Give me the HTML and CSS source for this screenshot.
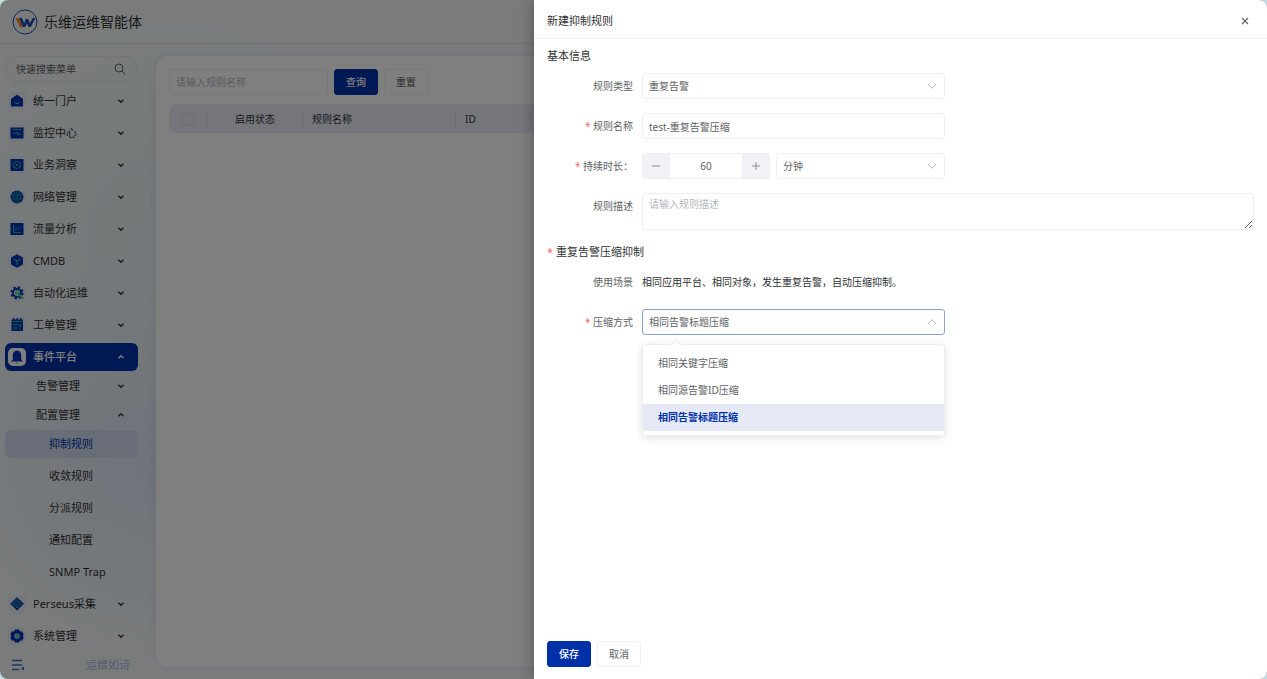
FILE: index.html
```html
<!DOCTYPE html>
<html lang="zh-CN">
<head>
    <meta charset="UTF-8">
    <meta name="viewport" content="width=device-width, initial-scale=1.0">
    <title>乐维运维智能体</title>
    <link rel="stylesheet" href="styles.css">
</head>
<body>
    <svg class="sprite" aria-hidden="true">
        <symbol id="chevron" viewBox="0 0 8 8"><path d="M1.5 2.8 4 5.2 6.5 2.8" fill="none" stroke="currentColor" stroke-width="1.4"/></symbol>
        <symbol id="arrow" viewBox="0 0 10 10"><path d="M1 3 5 7.3 9 3" fill="none" stroke="currentColor" stroke-width="1"/></symbol>
    </svg>

    <div class="app">
        <header class="topbar">
            <svg class="logo" viewBox="0 0 26 26">
                <circle cx="13" cy="13" r="12" fill="none" stroke="#1c4bb8" stroke-width="1"/>
                <path d="M3.5 9H7l4.2 9.200H7.800z" fill="#f08a24"/>
                <path d="M8.400 9 12.300 17.400 15 10.500 17.600 17.400 22.200 9" stroke="#1c4bb8" stroke-width="2.600" fill="none" stroke-linejoin="bevel"/>
            </svg>
            <h1>乐维运维智能体</h1>
        </header>

        <div class="layout">
            <aside class="sidebar">
                <div class="menu-search">
                    <input type="text" placeholder="快速搜索菜单" aria-label="快速搜索菜单">
                    <svg viewBox="0 0 12 12"><circle cx="5" cy="5" r="4" fill="none" stroke="currentColor"/><path d="M8 8 11.5 11.5" stroke="currentColor"/></svg>
                </div>
                <nav class="menu">
                    <button class="item">
                        <svg class="icon" viewBox="0 0 18 18"><path d="M9 2.5 15 7v7.5H3V7z" fill="#0033b5"/><path d="M6.5 10.500q2.500 2.500 5 0" stroke="#2fd58a" fill="none"/></svg>
                        <span>统一门户</span><svg class="chevron"><use href="#chevron"/></svg>
                    </button>
                    <button class="item">
                        <svg class="icon" viewBox="0 0 18 18"><path d="M2.5 3.500h13v11h-13z" fill="#0033b5"/><path d="M5 5.500h8M5 9.500h2l1.300-1.500 1.700 3.500 1.200-2H13" stroke="#2fd58a" stroke-width=".8" fill="none"/></svg>
                        <span>监控中心</span><svg class="chevron"><use href="#chevron"/></svg>
                    </button>
                    <button class="item">
                        <svg class="icon" viewBox="0 0 18 18"><path d="M2.5 3h13v12h-13z" fill="#0033b5"/><circle cx="9" cy="9" r="3.500" fill="none" stroke="#2fd58a" stroke-dasharray="4.500 1"/><circle cx="9" cy="9" r="1" fill="#2fd58a"/></svg>
                        <span>业务洞察</span><svg class="chevron"><use href="#chevron"/></svg>
                    </button>
                    <button class="item">
                        <svg class="icon" viewBox="0 0 18 18"><circle cx="9" cy="9" r="6.500" fill="#0033b5"/><path d="M3 7h12M3 11h12M9 2.500v13M7 3Q4 9 7 15M11 3q3 6 0 12" stroke="#28b98a" stroke-width=".7" fill="none"/></svg>
                        <span>网络管理</span><svg class="chevron"><use href="#chevron"/></svg>
                    </button>
                    <button class="item">
                        <svg class="icon" viewBox="0 0 18 18"><path d="M2.5 3h13v12h-13z" fill="#0033b5"/><path d="M5.500 5v7.500H13M6.500 10.500l2-2.500 1.500 1.500L13 6.500" stroke="#2fd58a" stroke-width=".8" fill="none"/></svg>
                        <span>流量分析</span><svg class="chevron"><use href="#chevron"/></svg>
                    </button>
                    <button class="item">
                        <svg class="icon" viewBox="0 0 18 18"><path d="M9 2.300 15 5.500v7L9 15.700 3 12.500v-7z" fill="#0033b5"/><path d="M5.500 7 9 9l3.500-2M9 9v4" stroke="#2fd58a" fill="none"/></svg>
                        <span>CMDB</span><svg class="chevron"><use href="#chevron"/></svg>
                    </button>
                    <button class="item">
                        <svg class="icon" viewBox="0 0 18 18"><circle cx="9" cy="8.800" r="5.500" fill="none" stroke="#0033b5" stroke-width="2.200" stroke-dasharray="2.300 2.020"/><circle cx="9" cy="8.800" r="4" fill="none" stroke="#0033b5" stroke-width="1.800"/><circle cx="9.300" cy="8.600" r="1.700" fill="none" stroke="#2fd58a" stroke-width="1.400"/><path d="m10.500 10 4.500 4.800" stroke="#2fd58a" stroke-width="2"/></svg>
                        <span>自动化运维</span><svg class="chevron"><use href="#chevron"/></svg>
                    </button>
                    <button class="item">
                        <svg class="icon" viewBox="0 0 18 18"><path d="M3.500 3.500h11.500v11.500H3.500zM5 2h1.500v2H5zM8.500 2H10v2H8.500zM12 2h1.500v2H12z" fill="#0033b5"/><path d="M4 5.500h10.500M5 8.500h5M5 11h4M5 13h4M11 8l1 2 1-2M12 10v4" stroke="#2fd58a" stroke-width=".8" fill="none"/></svg>
                        <span>工单管理</span><svg class="chevron"><use href="#chevron"/></svg>
                    </button>
                    <button class="item active" aria-expanded="true">
                        <svg class="icon" viewBox="0 0 18 18"><path d="M9 2.500q4.200.5 4.200 5v4l1.800 2H3l1.800-2v-4q0-4.500 4.200-5z" fill="#0033b5"/><path d="M7.500 14.500h3L9 16z" fill="#2fd58a"/></svg>
                        <span>事件平台</span><svg class="chevron up"><use href="#chevron"/></svg>
                    </button>
                    <div class="submenu">
                        <button class="item"><span>告警管理</span><svg class="chevron"><use href="#chevron"/></svg></button>
                        <button class="item" aria-expanded="true"><span>配置管理</span><svg class="chevron up"><use href="#chevron"/></svg></button>
                        <div class="leaves">
                            <a class="current" href="#">抑制规则</a>
                            <a href="#">收敛规则</a>
                            <a href="#">分派规则</a>
                            <a href="#">通知配置</a>
                            <a href="#">SNMP Trap</a>
                        </div>
                    </div>
                    <button class="item">
                        <svg class="icon" viewBox="0 0 18 18"><path d="m9 2.200 6.800 6.600L9 15.400 2.200 8.800z" fill="#0033b5"/><path d="m9 4.500 1.500 1.500L9 7.500 7.500 6zM9 10l1.500 1.500L9 13l-1.500-1.500zM6 7.300l1.500 1.500L6 10.300 4.500 8.800zM12 7.300l1.500 1.500-1.500 1.500-1.500-1.500z" fill="none" stroke="#2fd58a" stroke-width=".8"/></svg>
                        <span>Perseus采集</span><svg class="chevron"><use href="#chevron"/></svg>
                    </button>
                    <button class="item">
                        <svg class="icon" viewBox="0 0 18 18"><path d="M7 2.500h4l.8 1.800 2.400.2 1.500 3-1 1.500 1 1.600-1.500 3-2.400.2-.8 1.700H7l-.8-1.700-2.400-.2-1.500-3 1-1.600-1-1.500 1.500-3 2.400-.2z" fill="#0033b5"/><circle cx="9" cy="9" r="2.600" fill="#cfe8dc"/><circle cx="9" cy="9" r="1.800" fill="#35c98a"/></svg>
                        <span>系统管理</span><svg class="chevron"><use href="#chevron"/></svg>
                    </button>
                </nav>
                <div class="sidebar-foot">
                    <button aria-label="收起菜单">
                        <svg viewBox="0 0 12 12"><path d="M0 1.500h10M0 6h10M0 10.500h7" stroke="currentColor" stroke-width="1.400"/><path d="M12 7.500v4L8.500 9.500z" fill="currentColor"/></svg>
                    </button>
                    <span>运维如诗</span>
                </div>
            </aside>

            <main class="panel">
                <div class="filter">
                    <input type="text" placeholder="请输入规则名称" aria-label="规则名称">
                    <button class="btn primary">查询</button>
                    <button class="btn">重置</button>
                </div>
                <table class="rules">
                    <colgroup><col class="col-check"><col class="col-status"><col class="col-name"><col class="col-id"><col></colgroup>
                    <thead>
                        <tr>
                            <th><input type="checkbox" aria-label="全选"></th>
                            <th class="center">启用状态</th>
                            <th>规则名称</th>
                            <th>ID</th>
                            <th></th>
                        </tr>
                    </thead>
                </table>
            </main>
        </div>

        <div class="mask"></div>

        <section class="drawer" role="dialog" aria-labelledby="drawer-title">
            <header class="drawer-head">
                <h2 id="drawer-title">新建抑制规则</h2>
                <button class="close" aria-label="关闭"><svg viewBox="0 0 8 8"><path d="m1 1 6 6M7 1 1 7" stroke="currentColor" stroke-width="1.200"/></svg></button>
            </header>
            <form class="form">
                <h3>基本信息</h3>
                <div class="row">
                    <label for="type">规则类型</label>
                    <div class="select medium">
                        <select id="type"><option>重复告警</option></select>
                        <svg><use href="#arrow"/></svg>
                    </div>
                </div>
                <div class="row">
                    <label class="required" for="name">规则名称</label>
                    <input class="medium" id="name" type="text" value="test-重复告警压缩">
                </div>
                <div class="row">
                    <label class="required" for="duration">持续时长：</label>
                    <div class="duration medium">
                        <div class="stepper">
                            <button type="button" aria-label="减少"><svg viewBox="0 0 8 8"><path d="M0 4h8" stroke="currentColor"/></svg></button>
                            <input id="duration" type="text" value="60">
                            <button type="button" aria-label="增加"><svg viewBox="0 0 8 8"><path d="M0 4h8M4 0v8" stroke="currentColor"/></svg></button>
                        </div>
                        <div class="select">
                            <select aria-label="时间单位"><option>分钟</option></select>
                            <svg><use href="#arrow"/></svg>
                        </div>
                    </div>
                </div>
                <div class="row">
                    <label for="desc">规则描述</label>
                    <textarea id="desc" placeholder="请输入规则描述"></textarea>
                </div>

                <h3 class="required">重复告警压缩抑制</h3>
                <div class="row">
                    <span class="label">使用场景</span>
                    <p>相同应用平台、相同对象，发生重复告警，自动压缩抑制。</p>
                </div>
                <div class="row">
                    <label class="required" for="mode">压缩方式</label>
                    <div class="select medium open">
                        <select id="mode">
                            <option>相同关键字压缩</option>
                            <option>相同源告警ID压缩</option>
                            <option selected>相同告警标题压缩</option>
                        </select>
                        <svg class="up"><use href="#arrow"/></svg>
                        <ul class="dropdown" role="listbox" aria-label="压缩方式">
                            <li role="option">相同关键字压缩</li>
                            <li role="option">相同源告警ID压缩</li>
                            <li role="option" class="selected" aria-selected="true">相同告警标题压缩</li>
                        </ul>
                    </div>
                </div>
            </form>
            <footer class="drawer-foot">
                <button class="btn primary">保存</button>
                <button class="btn">取消</button>
            </footer>
        </section>
    </div>
</body>
</html>
```

FILE: styles.css
```css
* {
    box-sizing: border-box;
}
body {
    margin: 0;
    background: #c3dde2;
    color: #303133;
    font-family: "Noto Sans", "Noto Sans CJK SC", sans-serif;
    font-size: 10px;
    line-height: 16px;
}
h1, h2, h3, p, ul {
    margin: 0;
    padding: 0;
    font-weight: 400;
}
button, input, select, textarea {
    font: inherit;
    color: inherit;
    margin: 0;
}
button {
    cursor: pointer;
}
.sprite {
    display: none;
}
.app {
    position: relative;
    display: flex;
    flex-direction: column;
    height: 100vh;
    overflow: hidden;
    border-radius: 8px;
    background:
        radial-gradient(circle at 150px 460px, #dde7f5 0, rgba(221, 231, 245, 0) 210px),
        radial-gradient(circle at 170px 240px, #e6f0f4 0, rgba(230, 240, 244, 0) 240px),
        #f5f9f9;
}

/* top bar */
.topbar {
    display: flex;
    align-items: center;
    gap: 6px;
    height: 44px;
    padding: 0 12px;
    border-bottom: 1px solid #e0e6e8;
}
.topbar h1 {
    font-size: 14px;
    line-height: 20px;
}
.logo {
    width: 26px;
    height: 26px;
}
.layout {
    display: flex;
    flex: 1;
    min-height: 0;
}

/* sidebar */
.sidebar {
    display: flex;
    flex-direction: column;
    width: 143px;
    padding: 12px 5px 6px;
}
.menu-search {
    display: flex;
    align-items: center;
    height: 26px;
    padding: 0 11px 0 10px;
    margin-bottom: 5px;
    border: 1px solid #e4eaec;
    border-radius: 13px;
}
.menu-search input {
    flex: 1;
    min-width: 0;
    padding: 0;
    border: 0;
    background: none;
}
.menu-search input::placeholder {
    color: #606266;
}
.menu-search svg {
    width: 12px;
    height: 12px;
    color: #606266;
}
.menu {
    display: flex;
    flex-direction: column;
    gap: 4px;
}
.item {
    display: flex;
    align-items: center;
    gap: 7px;
    width: 133px;
    height: 28px;
    padding: 0 13px 0 3px;
    border: 0;
    border-radius: 6px;
    background: none;
    font-size: 11px;
    text-align: left;
}
.item span {
    flex: 1;
}
.icon {
    width: 18px;
    height: 18px;
    border-radius: 5px;
    background: #ebeef7;
}
.chevron {
    width: 8px;
    height: 8px;
}
.up {
    transform: rotate(180deg);
}
.item.active {
    background: #0030a8;
    color: #fff;
    font-weight: 500;
}
.item.active .icon {
    background: #fff;
}
.submenu {
    display: flex;
    flex-direction: column;
    gap: 1px;
    margin-top: -3px;
}
.submenu .item {
    padding-left: 31px;
}
.leaves {
    display: flex;
    flex-direction: column;
    gap: 4px;
}
.leaves a {
    width: 133px;
    padding: 6px 0 6px 44px;
    border-radius: 6px;
    color: inherit;
    font-size: 11px;
    text-decoration: none;
}
.leaves .current {
    background: #d0dbf1;
    color: #0030a8;
}
.sidebar-foot {
    display: flex;
    align-items: center;
    justify-content: space-between;
    margin-top: auto;
    padding: 0 8px 0 7px;
    color: #a9b8e4;
    font-size: 11px;
}
.sidebar-foot button {
    display: flex;
    padding: 0;
    border: 0;
    background: none;
    color: #4369c8;
}
.sidebar-foot svg {
    width: 12px;
    height: 12px;
}

/* rule list */
.panel {
    flex: 1;
    margin: 12px 13px;
    padding: 13px;
    border-radius: 12px;
    background: #fff;
    box-shadow: 0 0 8px rgba(100, 130, 180, 0.15);
}
.filter {
    display: flex;
    gap: 6px;
    margin-bottom: 9px;
}
.filter input {
    width: 159px;
}
.btn {
    height: 26px;
    padding: 0 11px;
    border: 1px solid #eef0f2;
    border-radius: 3px;
    background: #fff;
    color: #606266;
    min-width: 44px;
}
.btn.primary {
    border-color: #0030a8;
    background: #0030a8;
    color: #fff;
    font-weight: 500;
}
.rules {
    width: 100%;
    table-layout: fixed;
    border-collapse: separate;
    border-spacing: 0;
    border-radius: 8px;
    background: #eaecf7;
}
.rules th {
    height: 29px;
    padding: 0 9px;
    background: linear-gradient(#d3d6df, #d3d6df) right center / 1px 15px no-repeat;
    font-weight: 400;
    text-align: left;
}
.rules th:first-child {
    padding: 0 0 0 13px;
}
.rules .center {
    text-align: center;
}
.rules input {
    display: block;
    width: 12px;
    height: 12px;
    appearance: none;
    border: 1px solid #dadde8;
    border-radius: 2px;
}
.col-check { width: 38px; }
.col-status { width: 96px; }
.col-name { width: 153px; }
.col-id { width: 75px; }

.mask {
    position: absolute;
    inset: 0;
    background: rgba(0, 0, 0, 0.5);
}

/* drawer */
.drawer {
    position: absolute;
    top: 0;
    right: 0;
    bottom: 0;
    display: flex;
    flex-direction: column;
    width: 58%;
    max-width: 733px;
    background: #fff;
    box-shadow: 0 0 14px rgba(0, 0, 0, 0.35);
}
.drawer-head {
    display: flex;
    align-items: center;
    justify-content: space-between;
    height: 39px;
    padding: 3px 18px 0 13px;
    border-bottom: 1px solid #f0f2f4;
}
.drawer h2, .drawer h3 {
    font-size: 11px;
}
.close {
    display: flex;
    padding: 0;
    border: 0;
    background: none;
    color: #606266;
}
.close svg {
    width: 8px;
    height: 8px;
}
.form {
    flex: 1;
    padding: 9px 13px 0;
}
.form h3 {
    margin-bottom: 9px;
}
.row {
    display: flex;
    align-items: flex-start;
    gap: 9px;
    margin-bottom: 14px;
    color: #606266;
}
.row label, .label {
    width: 86px;
    line-height: 26px;
    text-align: right;
    white-space: nowrap;
}
.required::before {
    content: "* ";
    color: #f56c6c;
}
.row p {
    color: #303133;
    line-height: 26px;
}
.filter input, .row input, .row select, .row textarea {
    height: 26px;
    padding: 0 6px;
    border: 1px solid #eceef0;
    border-radius: 3px;
    background: #fff;
}
.row .medium {
    width: 303px;
}
.row textarea {
    flex: 1;
    height: 37px;
    padding-top: 2px;
    resize: vertical;
}
::placeholder {
    color: #b4b6bb;
}
.select {
    position: relative;
    display: flex;
    flex: 1;
}
.select.medium {
    flex: none;
}
.select select {
    width: 100%;
    appearance: none;
}
.select svg {
    position: absolute;
    top: 8px;
    right: 8px;
    width: 10px;
    height: 10px;
    color: #b4b6bb;
    pointer-events: none;
}
.select.open select {
    border-color: #8ba3c4;
}
.duration {
    display: flex;
    gap: 6px;
}
.stepper {
    display: flex;
    width: 128px;
    border: 1px solid #eceef0;
    border-radius: 3px;
    overflow: hidden;
}
.stepper button {
    display: flex;
    align-items: center;
    justify-content: center;
    width: 26px;
    padding: 0;
    border: 0;
    background: #f0f2f7;
    color: #909399;
}
.stepper svg {
    width: 8px;
    height: 8px;
}
.stepper input {
    flex: 1;
    min-width: 0;
    height: 24px;
    border-width: 0 1px;
    border-radius: 0;
    text-align: center;
}
.dropdown {
    position: absolute;
    top: 35px;
    left: 0;
    right: 0;
    padding: 5px 0 4px;
    border: 1px solid #eceef0;
    border-radius: 3px;
    background: #fff;
    box-shadow: 0 2px 9px rgba(0, 0, 0, 0.12);
    list-style: none;
}
.dropdown::before {
    content: "";
    position: absolute;
    top: -4px;
    left: 29px;
    width: 7px;
    height: 7px;
    border: 1px solid #eceef0;
    border-width: 1px 0 0 1px;
    background: #fff;
    transform: rotate(45deg);
}
.dropdown li {
    padding: 0 15px;
    line-height: 27px;
}
.dropdown .selected {
    background: #e5e9f6;
    color: #0030a8;
    font-weight: 700;
}
.drawer-foot {
    display: flex;
    gap: 6px;
    padding: 12px 13px;
}
```
